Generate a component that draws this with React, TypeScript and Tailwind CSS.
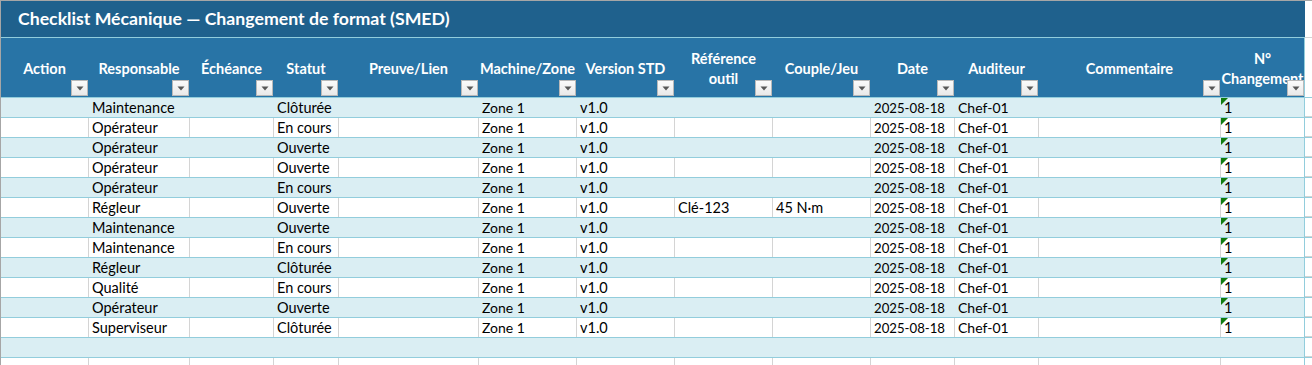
const font = "font-['Lato','Liberation_Sans',sans-serif]";

type Col = { title: string[]; w: string };

const cols: Col[] = [
  { title: ['Action'], w: 'w-[88px]' },
  { title: ['Responsable'], w: 'w-[101px]' },
  { title: ['Échéance'], w: 'w-[84px]' },
  { title: ['Statut'], w: 'w-[65px]' },
  { title: ['Preuve/Lien'], w: 'w-[140px]' },
  { title: ['Machine/Zone'], w: 'w-[98px]' },
  { title: ['Version STD'], w: 'w-[98px]' },
  { title: ['Référence', 'outil'], w: 'w-[98px]' },
  { title: ['Couple/Jeu'], w: 'w-[98px]' },
  { title: ['Date'], w: 'w-[84px]' },
  { title: ['Auditeur'], w: 'w-[84px]' },
  { title: ['Commentaire'], w: 'w-[182px]' },
  { title: ['N°', 'Changement'], w: 'w-[84px]' },
];

const people: [string, string, string, string][] = [
  ['Maintenance', 'Clôturée', '', ''],
  ['Opérateur', 'En cours', '', ''],
  ['Opérateur', 'Ouverte', '', ''],
  ['Opérateur', 'Ouverte', '', ''],
  ['Opérateur', 'En cours', '', ''],
  ['Régleur', 'Ouverte', 'Clé-123', '45 N·m'],
  ['Maintenance', 'Ouverte', '', ''],
  ['Maintenance', 'En cours', '', ''],
  ['Régleur', 'Clôturée', '', ''],
  ['Qualité', 'En cours', '', ''],
  ['Opérateur', 'Ouverte', '', ''],
  ['Superviseur', 'Clôturée', '', ''],
];

const rows: string[][] = [
  ...people.map(([resp, statut, ref, couple]) => [
    '', resp, '', statut, '', 'Zone 1', 'v1.0', ref, couple, '2025-08-18', 'Chef-01', '', '1',
  ]),
  Array(13).fill(''),
  Array(13).fill(''),
];

function FilterButton() {
  return (
    <div className="absolute right-0 bottom-[1px] w-[17px] h-[16px] border border-[#b9b9b9] bg-gradient-to-b from-[#fbfbfb] to-[#e9e9e9] flex items-center justify-center">
      <svg width="8" height="5" viewBox="0 0 8 5">
        <path d="M0.5 0.5h7L4 4.5z" fill="#575757" />
      </svg>
    </div>
  );
}

function Header() {
  return (
    <div className="flex h-[60px] bg-[#2874A6] border-b border-[#92CDDC]">
      {cols.map((c, i) => (
        <div
          key={i}
          className={`${c.w} relative h-full shrink-0 overflow-hidden flex flex-col items-center justify-center text-white font-bold text-[14.5px] leading-[20px] pt-[2px] ${
            i === cols.length - 1 ? 'border-r border-[#92CDDC]' : 'border-r border-transparent'
          }`}
        >
          {c.title.map((t) => (
            <span key={t} className="whitespace-nowrap">
              {t}
            </span>
          ))}
          <FilterButton />
        </div>
      ))}
      <div className="flex-1 bg-white" />
    </div>
  );
}

function Row({ cells, shaded, last }: { cells: string[]; shaded: boolean; last: boolean }) {
  return (
    <div className={`flex h-[20px] ${last ? '' : 'border-b border-[#92CDDC]'} ${shaded ? 'bg-[#DAEEF3]' : 'bg-white'}`}>
      {cells.map((v, i) => {
        const isLast = i === cells.length - 1;
        const edge = isLast
          ? 'border-r border-[#92CDDC]'
          : shaded
            ? 'border-r border-transparent'
            : 'border-r border-[#d4d4d4]';
        // Lato digits run wider than the original sheet font
        const size = i === 9 ? 'text-[13.2px]' : i === 10 || i === 5 ? 'text-[14px]' : 'text-[14.5px]';
        return (
          <div
            key={i}
            className={`${cols[i].w} ${edge} ${size} relative shrink-0 h-full px-[3px] flex items-end leading-[18px] text-black whitespace-nowrap overflow-hidden`}
          >
            {isLast && v && (
              <svg className="absolute left-0 top-0" width="7" height="7" viewBox="0 0 7 7">
                <path d="M0 0h7L0 7z" fill="#107c10" />
              </svg>
            )}
            {v}
          </div>
        );
      })}
      <div className={`flex-1 bg-white ${last ? '' : 'border-b border-[#d4d4d4]'}`} />
    </div>
  );
}

export default function App() {
  return (
    <div className={`w-[1312px] h-[365px] overflow-hidden bg-white ${font}`}>
      <div className="border-l border-[#a6a6a6]">
        <div className="flex h-[38px] border-t border-[#a6a6a6]">
          <div className="w-[1304px] h-full bg-[#1F618D] border-b border-[#92CDDC] flex items-center pl-[17px] text-white font-bold text-[17.7px]">
            Checklist Mécanique — Changement de format (SMED)
          </div>
          <div className="flex-1 bg-white border-b border-[#d4d4d4]" />
        </div>
        <Header />
        {rows.map((r, i) => (
          <Row key={i} cells={r} shaded={i % 2 === 0} last={i === rows.length - 1} />
        ))}
      </div>
    </div>
  );
}
